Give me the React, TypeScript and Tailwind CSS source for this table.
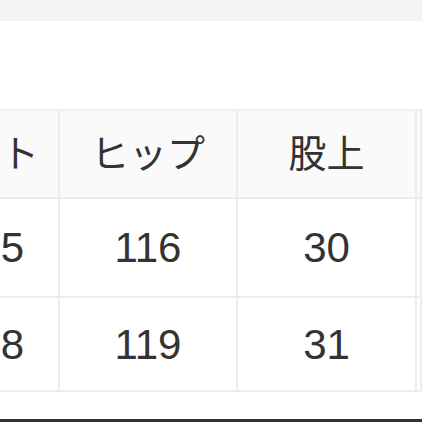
import React from "react";

const font = { fontFamily: '"Liberation Sans", "Noto Sans CJK JP", sans-serif' };

export default function App() {
  const cols = "grid grid-cols-[60px_178px_179px_5px]";
  const cell = "flex items-center justify-center border-r-2 border-b-2 border-[#ececec] overflow-hidden whitespace-nowrap";
  const leftCell = "flex items-center justify-end border-r-2 border-b-2 border-[#ececec] overflow-hidden whitespace-nowrap";
  return (
    <div className="w-[422px] h-[422px] bg-white flex flex-col overflow-hidden text-[#333]" style={font}>
      <div className="h-[21px] bg-[#f4f4f4]" />
      <div className="h-[88px]" />
      <div className={`${cols} border-t-2 border-[#efefef]`}>
        <div className={`${leftCell} h-[88px] bg-[#fafafa] text-[38px] pr-[19px]`}>ウエスト</div>
        <div className={`${cell} h-[88px] bg-[#fafafa] text-[38px]`}>ヒップ</div>
        <div className={`${cell} h-[88px] bg-[#fafafa] text-[38px]`}>股上</div>
        <div className={`${cell} h-[88px] bg-[#fafafa]`} />

        <div className={`${leftCell} h-[99px] text-[42px] pr-[34px]`}>85</div>
        <div className={`${cell} h-[99px] text-[42px]`}>116</div>
        <div className={`${cell} h-[99px] text-[42px]`}>30</div>
        <div className={`${cell} h-[99px]`} />

        <div className={`${leftCell} h-[94px] text-[42px] pr-[34px]`}>88</div>
        <div className={`${cell} h-[94px] text-[42px]`}>119</div>
        <div className={`${cell} h-[94px] text-[42px]`}>31</div>
        <div className={`${cell} h-[94px]`} />
      </div>
      <div className="flex-1" />
      <div className="h-[3px] bg-[#333]" />
    </div>
  );
}
